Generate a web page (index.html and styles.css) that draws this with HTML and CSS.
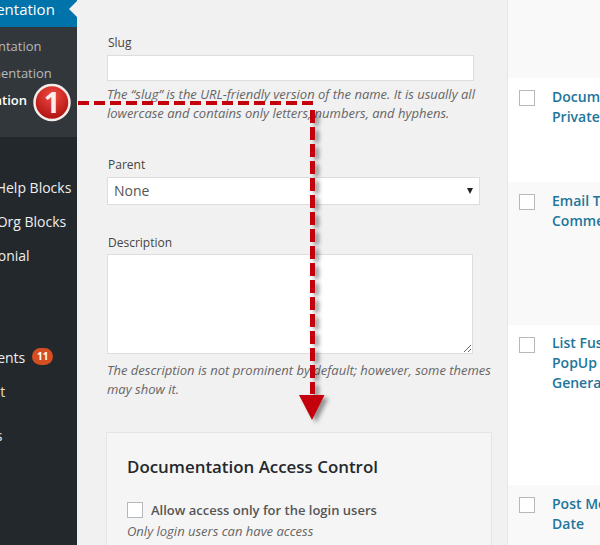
FILE: index.html
```html
<!DOCTYPE html>
<html lang="en">
<head>
    <meta charset="UTF-8">
    <title>Documentation Categories</title>
    <link rel="stylesheet" href="styles.css">
</head>
<body>
    <div class="page">
        <nav class="sidebar">
            <div class="menu-current">
                <span class="cut-current">Documentation</span>
            </div>
            <div class="submenu">
                <div class="sub-item cut-all">All Documentation</div>
                <div class="sub-item cut-add">Add Documentation</div>
                <div class="sub-item active cut-cat">Documentation</div>
            </div>
            <div class="menu">
                <div class="menu-item cut-help">Fusion Help Blocks</div>
                <div class="menu-item cut-org">Fusion Org Blocks</div>
                <div class="menu-item cut-test">Testimonial</div>
                <div class="menu-item cut-comments gap-top">Comments <span class="count">11</span></div>
                <div class="menu-item cut-short">Content</div>
                <div class="menu-item cut-last gap-small">Pages</div>
            </div>
        </nav>

        <main class="form-col">
            <div class="field field-slug">
                <label class="field-label">Slug</label>
                <input class="text-input" type="text">
                <p class="help">The “slug” is the URL-friendly version of the name. It is usually all lowercase and contains only letters, numbers, and hyphens.</p>
            </div>
            <div class="field field-parent">
                <label class="field-label">Parent</label>
                <div class="select-box">None <span class="select-arrow"></span></div>
            </div>
            <div class="field field-desc">
                <label class="field-label">Description</label>
                <textarea class="text-area"></textarea>
                <p class="help">The description is not prominent by default; however, some themes may show it.</p>
            </div>
            <section class="access-box">
                <h2>Documentation Access Control</h2>
                <div class="check-row">
                    <span class="check"></span>
                    <span>Allow access only for the login users</span>
                </div>
                <p class="check-note">Only login users can have access</p>
            </section>
        </main>

        <aside class="list-col">
            <div class="row row-head"></div>
            <div class="row row-1"><span class="check"></span><a href="#">Documentation<br>Private</a></div>
            <div class="row row-alt row-2"><span class="check"></span><a href="#">Email Template<br>Comment</a></div>
            <div class="row row-3"><span class="check"></span><a href="#">List Fusion<br>PopUp<br>General</a></div>
            <div class="row row-alt row-4"><span class="check"></span><a href="#">Post Meta<br>Date</a></div>
        </aside>

        <svg class="annotation" width="600" height="545" viewBox="0 0 600 545">
            <defs>
                <radialGradient id="badgeRed" cx="50%" cy="30%" r="75%">
                    <stop offset="0" stop-color="#f0493f"/>
                    <stop offset="1" stop-color="#a80d0d"/>
                </radialGradient>
                <filter id="soft" x="-20%" y="-20%" width="150%" height="150%">
                    <feDropShadow dx="4" dy="3" stdDeviation="2" flood-color="#000" flood-opacity="0.4"/>
                </filter>
            </defs>
            <g filter="url(#soft)">
                <path d="M312.500 110V394" fill="none" stroke="#c4000b" stroke-width="5" stroke-dasharray="13 4"/>
                <path d="M299 395H324.500L312 420Z" fill="#c4000b"/>
            </g>
            <path d="M78 103H314" fill="none" stroke="#c4000b" stroke-width="4" stroke-dasharray="11 5"/>
            <circle cx="52" cy="102.500" r="17.500" fill="url(#badgeRed)" stroke="#f3ece8" stroke-width="2.500"/>
            <text x="52" y="113" class="badge-num" text-anchor="middle">1</text>
        </svg>
    </div>
</body>
</html>
```

FILE: styles.css
```css
html, body {
    margin: 0;
    padding: 0;
}

body {
    font-family: "Open Sans", sans-serif;
    font-size: 13px;
    color: #444;
    background-color: #f1f1f1;
}

.page {
    position: relative;
    display: flex;
    width: 600px;
    height: 545px;
    overflow: hidden;
}

/* Sidebar */
.sidebar {
    flex: 0 0 77px;
    overflow: hidden;
    background-color: #23282d;
    color: #eee;
    font-size: 14px;
    white-space: nowrap;
}

.menu-current {
    position: relative;
    height: 27px;
    line-height: 18px;
    background-color: #0073aa;
    color: #fff;
    font-size: 15px;
}

.menu-current::after {
    content: "";
    position: absolute;
    right: 0;
    top: 1px;
    border: 8px solid transparent;
    border-right-color: #f1f1f1;
}

.cut-current {
    display: block;
    margin-left: -54px;
}

.submenu {
    height: 110px;
    padding-top: 9px;
    box-sizing: border-box;
    background-color: #32373c;
    color: #b4b9be;
    font-size: 13px;
}

.sub-item {
    height: 27px;
    line-height: 20px;
}

.sub-item.active {
    color: #fff;
    font-weight: 600;
}

.cut-all { margin-left: -71px; }
.cut-add { margin-left: -70px; }
.cut-cat { margin-left: -71px; }

.menu {
    padding-top: 41px;
}

.menu-item {
    height: 34px;
    line-height: 20px;
}

.cut-help { margin-left: -51px; }
.cut-org { margin-left: -50px; }
.cut-test { margin-left: -46px; }
.cut-comments { margin-left: -46px; }
.cut-short { margin-left: -47px; color: #f0d8c0; }
.cut-last { margin-left: -36px; }

.gap-top { margin-top: 68px; }
.gap-small { margin-top: 10px; }

.count {
    display: inline-block;
    min-width: 11px;
    margin-left: 3px;
    padding: 0 5px;
    border-radius: 9px;
    background-color: #d54e21;
    color: #fff;
    font-size: 10px;
    font-weight: 700;
    line-height: 17px;
    text-align: center;
    vertical-align: top;
}

/* Form column */
.form-col {
    flex: 0 0 430px;
    box-sizing: border-box;
    padding: 0 15px 0 30px;
}

.field-label {
    display: block;
    padding-left: 1px;
    line-height: 18px;
    color: #444;
    font-size: 12px;
}

.field-slug { padding-top: 34px; }
.field-parent { padding-top: 33px; }
.field-desc { padding-top: 29px; }

.text-input {
    display: block;
    width: 367px;
    height: 26px;
    margin: 3px 0 0;
    padding: 0;
    box-sizing: border-box;
    border: 1px solid #ddd;
    background-color: #fff;
}

.select-box {
    position: relative;
    width: 373px;
    height: 28px;
    margin-top: 3px;
    box-sizing: border-box;
    border: 1px solid #ddd;
    background-color: #fff;
    padding-left: 6px;
    font-size: 14px;
    line-height: 26px;
    color: #555;
}

.select-arrow {
    position: absolute;
    right: 6px;
    top: 10px;
    border: 3.500px solid transparent;
    border-top: 6px solid #222;
    border-bottom: 0;
}

.text-area {
    display: block;
    width: 366px;
    height: 100px;
    margin: 2px 0 0;
    padding: 0;
    box-sizing: border-box;
    border: 1px solid #ddd;
    background-color: #fff;
}

.help {
    width: 385px;
    margin: 4px 0 0;
    color: #666;
    font-size: 13px;
    font-style: italic;
    line-height: 19px;
}

.field-desc .help {
    margin-top: 7px;
}

.access-box {
    width: 386px;
    height: 130px;
    margin: 33px 0 0 -1px;
    padding: 22px 20px;
    box-sizing: border-box;
    border: 1px solid #e5e5e5;
    background-color: #f6f5f5;
}

.access-box h2 {
    margin: 0;
    color: #23282d;
    font-size: 16.900px;
    font-weight: 600;
    line-height: 24px;
}

.check-row {
    display: flex;
    align-items: center;
    gap: 8px;
    margin-top: 22px;
    font-size: 13px;
    font-weight: 600;
    color: #555;
}

.check {
    display: block;
    flex: 0 0 16px;
    width: 16px;
    height: 16px;
    box-sizing: border-box;
    border: 1px solid #b4b9be;
    background-color: #fff;
}

.check-note {
    margin: 3px 0 0;
    color: #666;
    font-size: 13px;
    font-style: italic;
    line-height: 18px;
}

/* Right table */
.list-col {
    flex: 1;
    border-left: 1px solid #e5e5e5;
    background-color: #fff;
    white-space: nowrap;
}

.row {
    display: flex;
    gap: 17px;
    box-sizing: border-box;
    padding: 12px 0 0 11px;
}

.row a {
    margin-top: -3px;
    color: #21759b;
    font-size: 14px;
    font-weight: 600;
    line-height: 20px;
    text-decoration: none;
}

.row-3 a {
    margin-top: -4px;
}

.row-head { height: 78px; background-color: #f9f9f9; }
.row-alt { background-color: #f9f9f9; }
.row-1 { height: 104px; }
.row-2 { height: 143px; }
.row-3 { height: 160px; }
.row-4 { height: 60px; }

/* Annotation overlay */
.annotation {
    position: absolute;
    left: 0;
    top: 0;
}

.badge-num {
    font-family: "Open Sans", sans-serif;
    font-size: 29px;
    font-weight: 700;
    fill: #fbeeea;
}
```
